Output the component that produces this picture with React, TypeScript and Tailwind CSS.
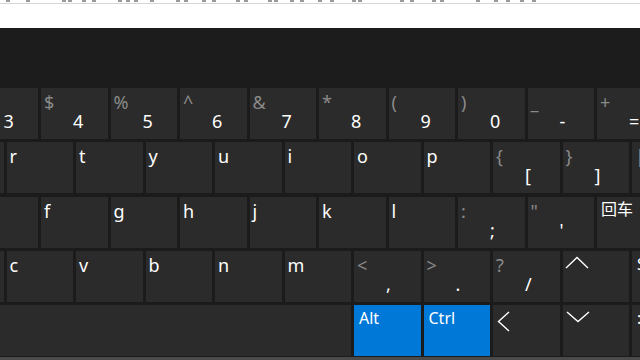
type Key = {
  pri?: string;
  sec?: string;
  letter?: string;
  label?: string;
  cjk?: string;
  icon?: 'left' | 'up' | 'down';
  blue?: boolean;
  wide?: string;
};

const rows: { offset: string; keys: Key[] }[] = [
  {
    offset: 'ml-[-28.5px]',
    keys: [
      { sec: '#', pri: '3' },
      { sec: '$', pri: '4' },
      { sec: '%', pri: '5' },
      { sec: '^', pri: '6' },
      { sec: '&', pri: '7' },
      { sec: '*', pri: '8' },
      { sec: '(', pri: '9' },
      { sec: ')', pri: '0' },
      { sec: '_', pri: '-' },
      { sec: '+', pri: '=' },
    ],
  },
  {
    offset: 'ml-[-63px]',
    keys: [
      { letter: 'e' },
      { letter: 'r' },
      { letter: 't' },
      { letter: 'y' },
      { letter: 'u' },
      { letter: 'i' },
      { letter: 'o' },
      { letter: 'p' },
      { sec: '{', pri: '[' },
      { sec: '}', pri: ']' },
      { sec: '|', pri: '\\' },
    ],
  },
  {
    offset: 'ml-[-28.5px]',
    keys: [
      { letter: 'd' },
      { letter: 'f' },
      { letter: 'g' },
      { letter: 'h' },
      { letter: 'j' },
      { letter: 'k' },
      { letter: 'l' },
      { sec: ':', pri: ';' },
      { sec: '"', pri: "'" },
      { cjk: '回车', wide: 'w-[140px]' },
    ],
  },
  {
    offset: 'ml-[-63px]',
    keys: [
      { letter: 'x' },
      { letter: 'c' },
      { letter: 'v' },
      { letter: 'b' },
      { letter: 'n' },
      { letter: 'm' },
      { sec: '<', pri: ',' },
      { sec: '>', pri: '.' },
      { sec: '?', pri: '/' },
      { icon: 'up' },
      { label: 'Shift' },
    ],
  },
  {
    offset: 'ml-[-63px]',
    keys: [
      { wide: 'w-[414px]' },
      { label: 'Alt', blue: true },
      { label: 'Ctrl', blue: true },
      { icon: 'left' },
      { icon: 'down' },
      { label: ':' },
    ],
  },
];

function Chevron({ dir }: { dir: 'left' | 'up' | 'down' }) {
  if (dir === 'left')
    return (
      <svg width="13" height="21" viewBox="0 0 13 21" className="mt-[4px] ml-[1px]">
        <polyline points="12,1 1.5,10.5 12,20" fill="none" stroke="#fff" strokeWidth="1.4" />
      </svg>
    );
  if (dir === 'up')
    return (
      <svg width="24" height="13" viewBox="0 0 24 13" className="mt-[3px] ml-[-1px]">
        <polyline points="1,12 12,1.5 23,12" fill="none" stroke="#fff" strokeWidth="1.4" />
      </svg>
    );
  return (
    <svg width="24" height="12" viewBox="0 0 24 12" className="mt-[4px]">
      <polyline points="1,1 12,10.5 23,1" fill="none" stroke="#fff" strokeWidth="1.4" />
    </svg>
  );
}

function KeyCap({ k }: { k: Key }) {
  return (
    <div
      className={`${k.wide ?? 'w-[66.5px]'} h-[51px] shrink-0 flex flex-col pt-[2px] px-[3px] ${
        k.blue ? 'bg-[#0078d7]' : 'bg-[#2b2b2b]'
      }`}
    >
      {k.letter && <span className="text-[18px] leading-[24px] text-white">{k.letter}</span>}
      {k.sec && (
        <>
          <span className="text-[18px] leading-[24px] text-[#8a8a8a]">{k.sec}</span>
          <span className="text-[18px] leading-[24px] mt-[-5px] ml-[29px] text-white">{k.pri}</span>
        </>
      )}
      {k.label && (
        <span className="text-[16px] leading-[20px] pl-[2px] pt-[1px] text-white">{k.label}</span>
      )}
      {k.cjk && (
        <span className="text-[16px] leading-[20px] pl-[1px] text-white">{k.cjk}</span>
      )}
      {k.icon && <Chevron dir={k.icon} />}
    </div>
  );
}

const toolbarMarks = [
  6, 26, 62, 68, 82, 92, 118, 126, 134, 150, 176, 184, 202, 212, 236, 244, 268, 274, 290, 300, 318, 330,
  352, 358, 400, 410, 432, 440, 476, 494, 506, 520, 532,
];

export default function App() {
  return (
    <div
      className="w-[640px] h-[360px] overflow-hidden bg-white flex flex-col"
      style={{ fontFamily: '"Noto Sans", "Noto Sans CJK SC", sans-serif' }}
    >
      {/* 上のツールバーの切れ端 */}
      <div className="h-[28px] shrink-0 bg-white">
        <div className="relative h-[3px]">
          {toolbarMarks.map(x => (
            <span key={x} className="absolute top-0 w-[4px] h-[2px] bg-[#9a9a9a]" style={{ left: x }} />
          ))}
        </div>
        <div className="h-px bg-[#d6d6d6]" />
      </div>

      {/* キーボード */}
      <div className="flex-1 bg-[#1b1b1b] flex flex-col">
        <div className="h-[60px] shrink-0 bg-[#1c1c1c]" />
        <div className="flex flex-col gap-[3.3px]">
          {rows.map((row, i) => (
            <div key={i} className={`flex gap-[3px] ${row.offset}`}>
              {row.keys.map((k, j) => (
                <KeyCap key={j} k={k} />
              ))}
            </div>
          ))}
        </div>
        <div className="mt-auto h-[3px] bg-[#4a4a4a]" />
      </div>
    </div>
  );
}
